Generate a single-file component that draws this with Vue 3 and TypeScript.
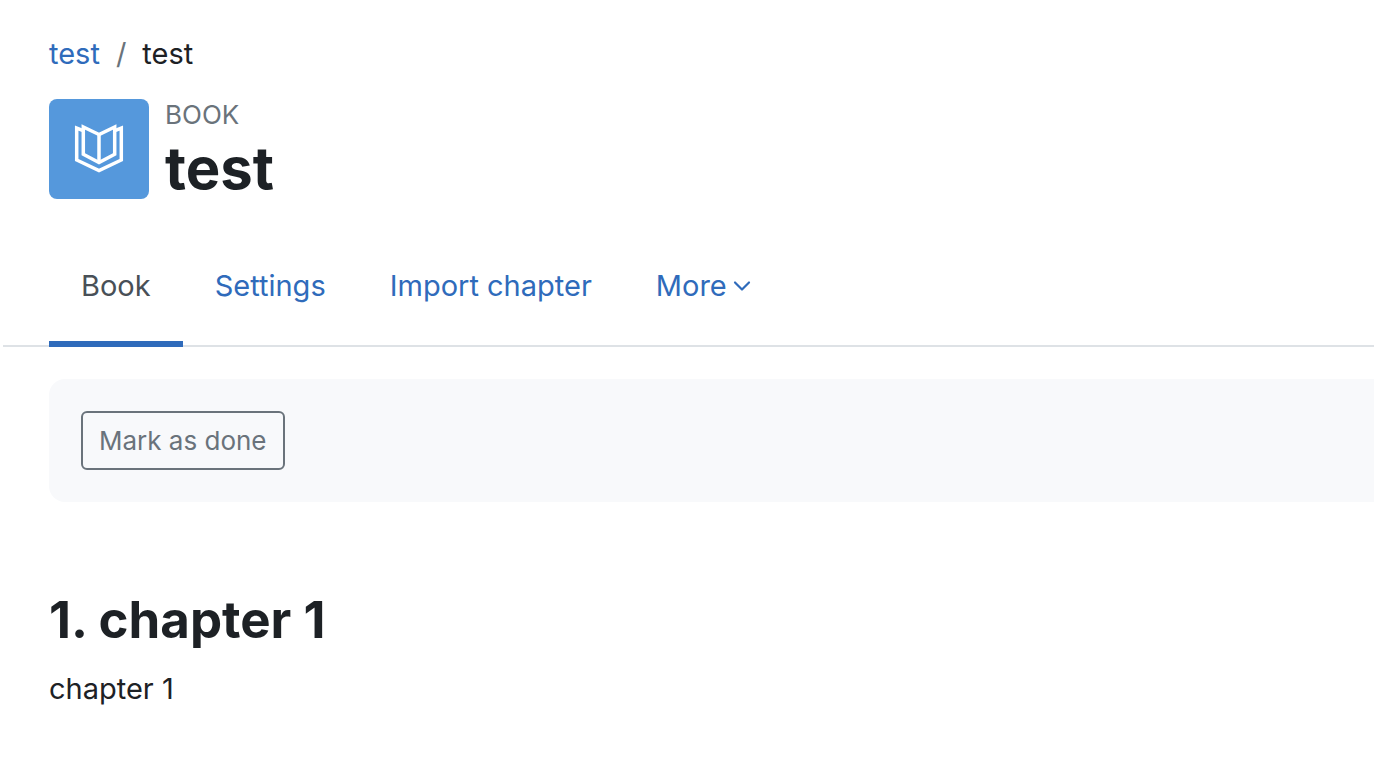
<script setup lang="ts">
import { ref } from 'vue'

interface Tab {
  label: string
  menu?: boolean
}

const tabs: Tab[] = [
  { label: 'Book' },
  { label: 'Settings' },
  { label: 'Import chapter' },
  { label: 'More', menu: true },
]
const active = ref('Book')
</script>

<template>
  <div class="page">
    <nav class="crumbs" aria-label="Breadcrumb">
      <a href="#" class="link">test</a>
      <span class="slash">/</span>
      <span>test</span>
    </nav>

    <header class="header">
      <div class="tile">
        <svg width="52" height="52" viewBox="0 0 52 52" fill="none" stroke="#fff" stroke-width="3.500" aria-hidden="true">
          <path d="M26 11.500 10.300 4V31.200L26 39.600 41.700 31.200V4Z" />
          <path d="M26 11.500V39.600" />
          <path d="M9.500 7.300 3.700 5V37L26 47.500 48.300 37V5L42.500 7.300" />
        </svg>
      </div>
      <div>
        <div class="kind">BOOK</div>
        <h1 class="title">test</h1>
      </div>
    </header>

    <nav class="tabs" aria-label="Book navigation">
      <template v-for="tab in tabs" :key="tab.label">
        <button v-if="tab.menu" type="button" class="tab" aria-haspopup="menu">
          {{ tab.label }}
          <svg class="chevron" width="18" height="12" viewBox="0 0 18 12" fill="none" stroke="currentColor" stroke-width="2.200" stroke-linecap="round" stroke-linejoin="round" aria-hidden="true">
            <path d="M2 2.500 9 9.500 16 2.500" />
          </svg>
        </button>
        <a v-else href="#" class="tab" :class="{ active: active === tab.label }" @click.prevent="active = tab.label">{{ tab.label }}</a>
      </template>
    </nav>

    <main class="content">
      <section class="completion">
        <button type="button" class="done">Mark as done</button>
      </section>
      <h2 class="chapter">1. chapter 1</h2>
      <p class="text">chapter 1</p>
    </main>
  </div>
</template>

<style>
body {
  margin: 0;
  background: #fff;
}
</style>

<style scoped>
.page {
  box-sizing: border-box;
  padding: 32px 0 32px 3px;
  overflow: hidden;
  font-family: Inter, "Liberation Sans", sans-serif;
  font-size: 29px;
  line-height: 44px;
  color: #1d2125;
}
.crumbs {
  display: flex;
  gap: 16px;
  padding-left: 46px;
}
.link {
  color: #2f6bbb;
  text-decoration: none;
}
.slash {
  color: #6a737b;
}
.header {
  display: flex;
  gap: 16px;
  height: 108px;
  margin-top: 23px;
  padding-left: 46px;
}
.tile {
  display: flex;
  align-items: center;
  justify-content: center;
  width: 100px;
  height: 100px;
  border-radius: 8px;
  background: #5598dc;
}
.kind {
  font-size: 26px;
  line-height: 32px;
  color: #6a737b;
}
.title {
  margin: 0;
  font-size: 58px;
  line-height: 74px;
  font-weight: 700;
}
.tabs {
  display: flex;
  margin-top: 18px;
  padding-left: 46px;
  border-bottom: 2px solid #dee2e6;
}
.tab {
  display: flex;
  align-items: center;
  box-sizing: border-box;
  height: 122px;
  margin: 0 0 -2px;
  padding: 6px 32px 0;
  border: 0;
  border-bottom: 6px solid transparent;
  background: none;
  font: inherit;
  color: #2f6bbb;
  text-decoration: none;
  white-space: nowrap;
}
.tab.active {
  border-bottom-color: #2f6bbb;
  color: #495057;
}
.chevron {
  margin-left: 6px;
}
.content {
  padding: 32px 0 0 46px;
}
.completion {
  padding: 32px;
  border-radius: 16px 0 0 16px;
  background: #f8f9fb;
}
.done {
  display: block;
  padding: 8px 16px;
  border: 2px solid #6a737b;
  border-radius: 6px;
  background: transparent;
  font: inherit;
  font-size: 26px;
  line-height: 39px;
  color: #6a737b;
}
.chapter {
  margin: 86px 0 15px;
  font-size: 51px;
  line-height: 64px;
  font-weight: 700;
}
.text {
  margin: 0;
}
</style>
